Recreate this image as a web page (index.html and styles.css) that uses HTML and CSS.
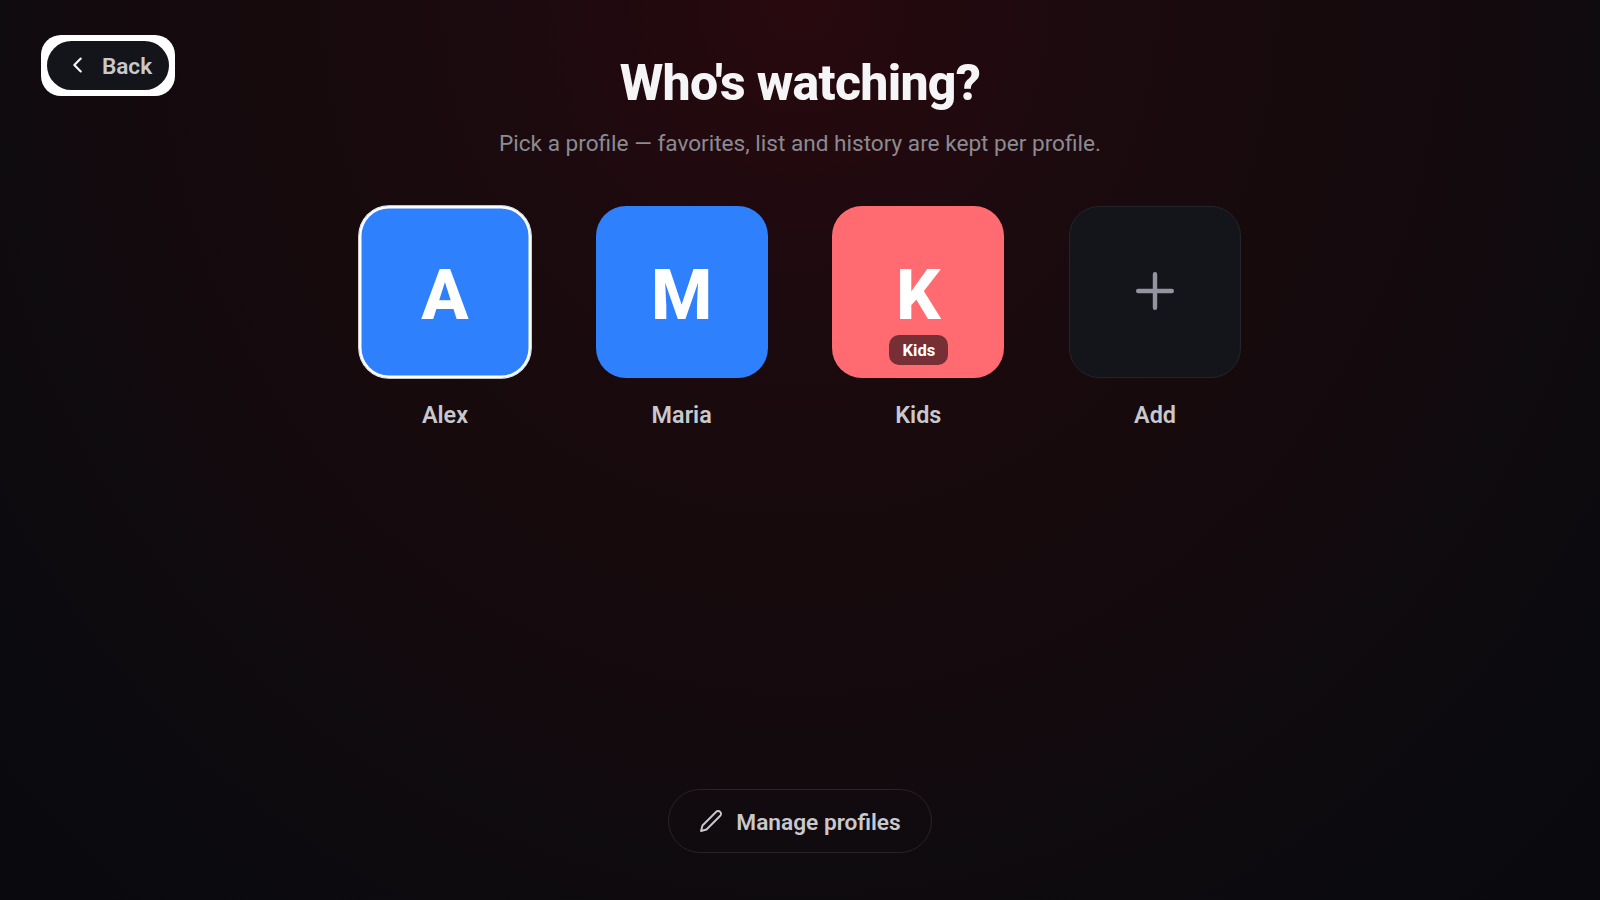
FILE: index.html
```
<!DOCTYPE html>
<html lang="en">
<head>
    <meta charset="UTF-8">
    <meta name="viewport" content="width=device-width, initial-scale=1.0">
    <title>Who's watching?</title>
    <link rel="stylesheet" href="styles.css">
</head>
<body>
    <div class="screen">
        <button class="back">
            <span class="back-inner">
                <svg class="back-icon" viewBox="0 0 24 24"><path d="M15 5l-7 7 7 7"/></svg>
                <span>Back</span>
            </span>
        </button>

        <div class="header">
            <h1 class="title">Who's watching?</h1>
            <p class="subtitle">Pick a profile — favorites, list and history are kept per profile.</p>
        </div>

        <div class="profiles">
            <div class="profile">
                <div class="avatar blue selected">A</div>
                <div class="name">Alex</div>
            </div>
            <div class="profile">
                <div class="avatar blue">M</div>
                <div class="name">Maria</div>
            </div>
            <div class="profile">
                <div class="avatar coral">K<span class="badge">Kids</span></div>
                <div class="name">Kids</div>
            </div>
            <div class="profile">
                <div class="avatar add">
                    <svg class="plus-icon" viewBox="0 0 38 38"><path d="M19 2.2v33.6M2.2 19h33.6"/></svg>
                </div>
                <div class="name">Add</div>
            </div>
        </div>

        <button class="manage">
            <svg class="edit-icon" viewBox="0 0 24 24"><path d="M17 3a2.85 2.83 0 1 1 4 4L7.5 20.5 2 22l1.5-5.5Z"/></svg>
            <span>Manage profiles</span>
        </button>
    </div>
</body>
</html>
```

FILE: styles.css
```
* {
    margin: 0;
    padding: 0;
    box-sizing: border-box;
}

body {
    background-color: #0a0b0e;
    font-family: Roboto, sans-serif;
}

button {
    border: none;
    font-family: inherit;
    cursor: pointer;
}

svg {
    display: block;
    fill: none;
    stroke: currentColor;
    stroke-linecap: round;
    stroke-linejoin: round;
}

.screen {
    position: relative;
    height: 900px;
    padding: 52px 0 47px;
    display: flex;
    flex-direction: column;
    align-items: center;
    overflow: hidden;
    background: radial-gradient(ellipse 1090px 1180px at 50% 0, #28090e 0%, #1c0a0f 26%, #170a0d 46%, #130a0e 66%, #0f0b0e 72%, #0a0a0e 100%);
}

/* back button stays in the corner, above the centred column */
.back {
    position: absolute;
    top: 35px;
    left: 41.4px;
    padding: 6px;
    border-radius: 20px;
    background-color: #fff;
}

.back-inner {
    display: flex;
    align-items: center;
    gap: 12.5px;
    width: 121.6px;
    height: 49px;
    padding: 1px 0 0 20px;
    border-radius: 25px;
    background-color: #14151b;
    color: #c8c8cd;
    font-size: 22.6px;
    font-weight: 600;
}

.back-icon {
    width: 22px;
    height: 22px;
    margin-top: -2px;
    color: #f5f5f7;
    stroke-width: 2.4;
}

.header {
    text-align: center;
}

.title {
    color: #f5f5f7;
    font-size: 50px;
    font-weight: 800;
    line-height: 62px;
    letter-spacing: -0.7px;
}

.subtitle {
    margin-top: 15px;
    color: #8c8a92;
    font-size: 22.6px;
    line-height: 30px;
}

.profiles {
    display: flex;
    gap: 64.7px;
    margin-top: 46.6px;
}

.profile {
    width: 172px;
    text-align: center;
}

.avatar {
    position: relative;
    display: flex;
    align-items: center;
    justify-content: center;
    height: 172px;
    padding-top: 6px;
    border-radius: 30px;
    color: #fff;
    font-size: 70px;
    font-weight: 800;
}

.blue {
    background-color: #2e80fc;
}

.coral {
    background-color: #ff6b70;
}

.selected {
    box-shadow: 0 0 0 0.8px #fff, inset 0 0 0 2.5px #fff;
}

.add {
    padding: 0 0 1px;
    border: 1px solid #24252b;
    background-color: #14151b;
    color: #9494a0;
}

.plus-icon {
    width: 38px;
    height: 38px;
    stroke-width: 4.4;
}

.badge {
    position: absolute;
    bottom: 12.6px;
    left: 57px;
    width: 59px;
    height: 30px;
    border-radius: 10px;
    background-color: #752f35;
    font-size: 16.5px;
    font-weight: 700;
    line-height: 32px;
}

.name {
    margin-top: 22.8px;
    color: #c8c8cd;
    font-size: 23.4px;
    font-weight: 600;
    line-height: 30px;
}

.manage {
    display: flex;
    align-items: center;
    gap: 13px;
    height: 64px;
    margin-top: auto;
    padding: 2px 30px 0;
    border: 1px solid #252429;
    border-radius: 32px;
    background-color: transparent;
    color: #c8c8cd;
    font-size: 22.7px;
    font-weight: 600;
}

.edit-icon {
    width: 24px;
    height: 24px;
    margin-top: -3px;
    stroke-width: 1.9;
}
```
